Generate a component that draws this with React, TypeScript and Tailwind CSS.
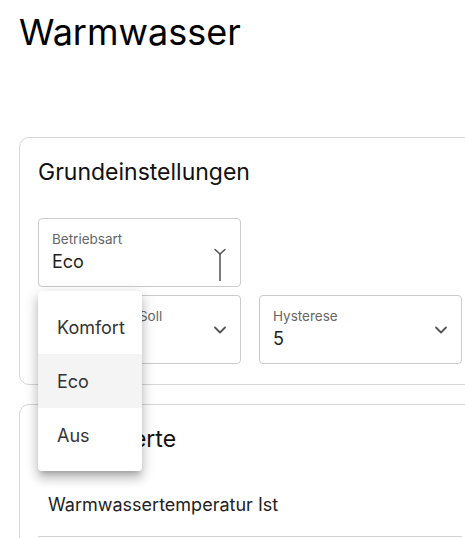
import { useState } from "react";

const options = ["Komfort", "Eco", "Aus"];

function Chevron() {
  return (
    <svg width="12" height="8" viewBox="0 0 12 8" className="text-[#555]">
      <polyline
        points="1,1.5 6,6.5 11,1.5"
        fill="none"
        stroke="currentColor"
        strokeWidth="1.8"
        strokeLinecap="round"
        strokeLinejoin="round"
      />
    </svg>
  );
}

function FlippingChevron() {
  return (
    <svg width="14" height="34" viewBox="0 0 14 34" className="text-[#555]">
      <polyline
        points="2,1.5 7,6 12,1.5"
        fill="none"
        stroke="currentColor"
        strokeWidth="1.6"
        strokeLinecap="round"
        strokeLinejoin="round"
      />
      <line x1="7" y1="6" x2="7" y2="33" stroke="#444" strokeWidth="1.4" />
    </svg>
  );
}

function SelectBox({
  label,
  value,
  icon,
}: {
  label: string;
  value: string;
  icon?: React.ReactNode;
}) {
  return (
    <div className="flex h-[69px] w-[203px] items-center justify-between rounded-[4px] border border-[#cbcbcb] bg-white pl-[13px] pr-[14px]">
      <div className="flex flex-col">
        <span className="text-[13.5px] leading-[16px] text-[#666]">{label}</span>
        <span className="mt-[3px] text-[18px] leading-[24px] text-[#1f1f1f]">
          {value}
        </span>
      </div>
      {icon ?? <Chevron />}
    </div>
  );
}

export default function App() {
  const [mode, setMode] = useState("Eco");

  return (
    <div
      className="min-h-screen overflow-hidden bg-white pl-[19px]"
      style={{ fontFamily: 'Inter, "Noto Sans", sans-serif' }}
    >
      <h1 className="mt-[12px] text-[36px] leading-[40px] font-normal text-black">
        Warmwasser
      </h1>

      <div className="mt-[85px] w-[462px] rounded-[10px] border border-[#d6d6d6] px-[18px] pt-[18px] pb-[20px]">
        <h2 className="text-[23px] leading-[33px] text-[#111]">
          Grundeinstellungen
        </h2>

        <div className="relative mt-[29px] flex flex-col gap-[8px]">
          <div className="relative">
            <SelectBox
              label="Betriebsart"
              value={mode}
              icon={
                <div className="mt-[25px] -mr-[1px]">
                  <FlippingChevron />
                </div>
              }
            />
            <div className="absolute top-[73px] left-0 z-10 w-[104px] rounded-[4px] bg-white py-[9px] shadow-[0px_5px_5px_-3px_rgba(0,0,0,0.2),0px_8px_10px_1px_rgba(0,0,0,0.14),0px_3px_14px_2px_rgba(0,0,0,0.12)]">
              {options.map((o) => (
                <div
                  key={o}
                  onClick={() => setMode(o)}
                  className={`flex h-[54px] cursor-pointer items-center pl-[19px] text-[18px] text-[#333] ${
                    o === mode ? "bg-[#f4f4f4]" : "bg-white"
                  }`}
                >
                  {o}
                </div>
              ))}
            </div>
          </div>

          <div className="flex gap-[18px]">
            <SelectBox label="Warmwasser Soll" value="50" />
            <SelectBox label="Hysterese" value="5" />
          </div>
        </div>
      </div>

      <div className="mt-[19px] w-[462px] rounded-[10px] border border-[#d6d6d6] px-[18px] pt-[18px] pb-[20px]">
        <h2 className="text-[23px] leading-[33px] text-[#111]">Sensorwerte</h2>
        <div className="mt-[18px] border-b border-[#d3d3d3] px-[10px] pt-[19px] pb-[19px]">
          <span className="text-[18px] leading-[24px] text-[#222]">
            Warmwassertemperatur Ist
          </span>
        </div>
      </div>
    </div>
  );
}
